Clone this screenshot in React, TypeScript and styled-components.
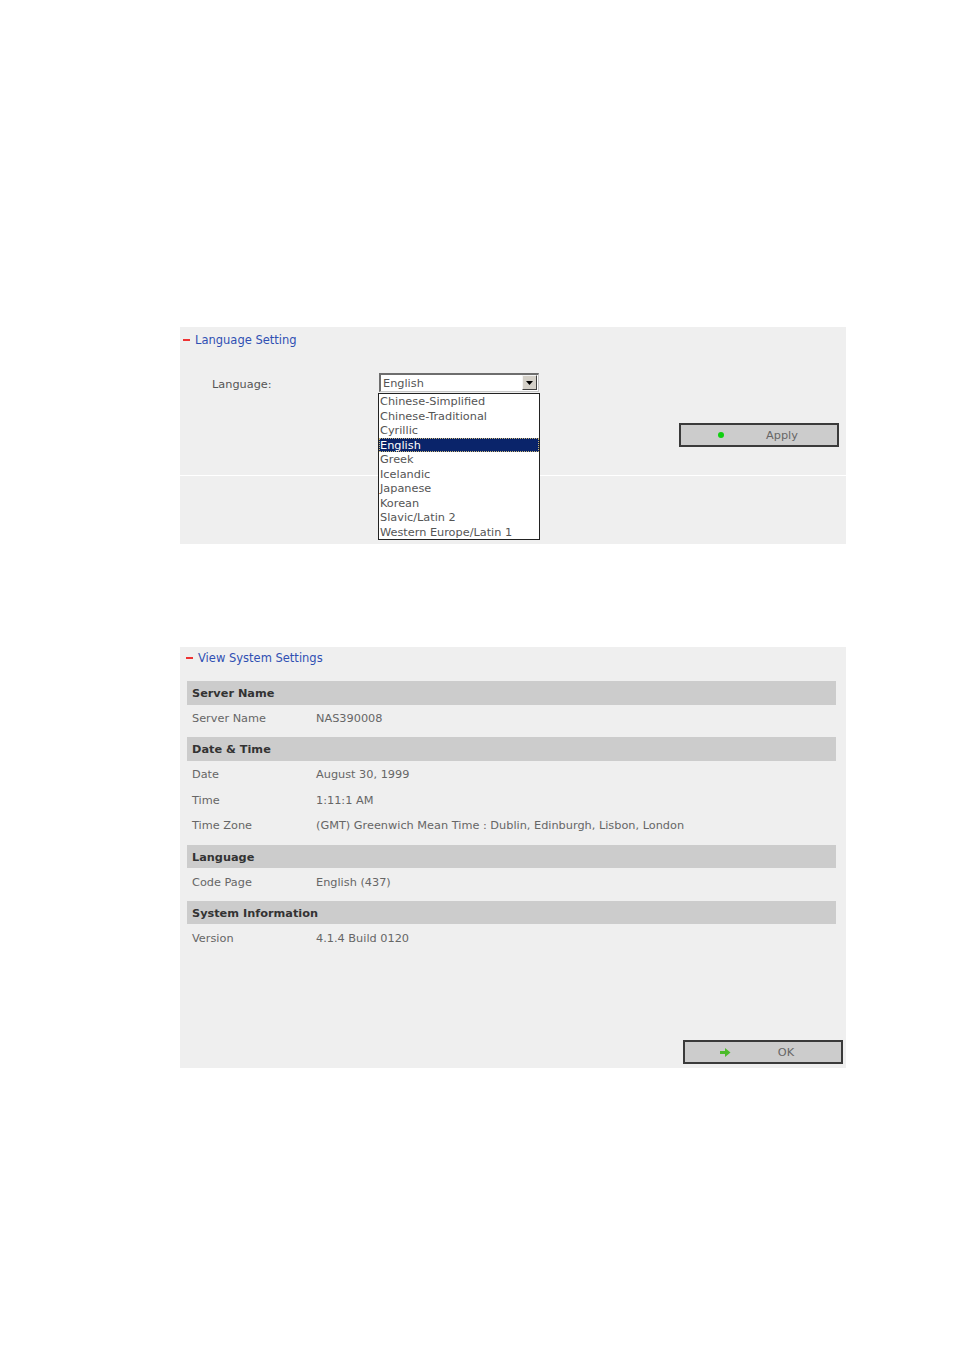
import React from "react";
import styled, { createGlobalStyle } from "styled-components";

const GlobalStyle = createGlobalStyle`
  html, body {
    margin: 0;
    padding: 0;
    background: #ffffff;
  }
  body {
    font-family: "DejaVu Sans", Verdana, sans-serif;
    font-size: 11.3px;
    color: #555555;
  }
`;

const Page = styled.div`
  display: flex;
  flex-direction: column;
  gap: 103px;
  padding: 327px 0 0 180px;
  min-height: 1350px;
  box-sizing: border-box;
`;

const Panel = styled.section<{ $height: number }>`
  position: relative;
  width: 666px;
  height: ${(p) => p.$height}px;
  background: #efefef;
  display: flex;
  flex-direction: column;
  box-sizing: border-box;
`;

const Title = styled.div<{ $indent: number; $top: number }>`
  display: flex;
  align-items: center;
  gap: 5px;
  height: 14px;
  margin-top: ${(p) => p.$top}px;
  padding-left: ${(p) => p.$indent}px;
  color: #2f4fb3;
  font-size: 11.5px;
`;

const Dash = styled.span`
  display: inline-block;
  width: 7px;
  height: 1.5px;
  background: #ee3333;
`;

const Upper = styled.div`
  height: 149px;
  border-bottom: 1px solid #ffffff;
  display: flex;
  flex-direction: column;
  padding-top: 6px;
  box-sizing: border-box;
`;

const Lower = styled.div`
  flex: 1;
`;

const FormRow = styled.div`
  display: flex;
  align-items: center;
  height: 19px;
  margin-top: 26px;
  padding-left: 32px;
`;

const FieldLabel = styled.span`
  width: 167px;
  padding-top: 3px;
  color: #555555;
`;

const SelectBox = styled.div`
  position: relative;
  width: 160px;
  height: 19px;
  box-sizing: border-box;
  background: #ffffff;
  border-top: 2px solid #6e6e6e;
  border-left: 2px solid #6e6e6e;
  border-right: 1px solid #c8c8c8;
  border-bottom: 1px solid #c8c8c8;
  display: flex;
  align-items: center;
  padding-left: 2px;
  color: #555555;
`;

const SelectArrow = styled.span`
  position: absolute;
  right: 1px;
  top: 0px;
  width: 15px;
  height: 15px;
  box-sizing: border-box;
  background: #d4d0c8;
  border-top: 1px solid #f4f4f4;
  border-left: 1px solid #f4f4f4;
  border-right: 1px solid #404040;
  border-bottom: 1px solid #404040;
  display: flex;
  align-items: center;
  justify-content: center;
`;

const DropList = styled.ul`
  position: absolute;
  top: 18px;
  left: -3px;
  width: 162px;
  margin: 0;
  padding: 0;
  list-style: none;
  background: #ffffff;
  border: 1px solid #222222;
  box-sizing: border-box;
  z-index: 2;
`;

const DropItem = styled.li<{ $active?: boolean }>`
  height: 14.5px;
  line-height: 15.5px;
  padding-left: 1px;
  white-space: nowrap;
  overflow: hidden;
  color: ${(p) => (p.$active ? "#ffffff" : "#555555")};
  background: ${(p) => (p.$active ? "#0a246a" : "transparent")};
  outline: ${(p) => (p.$active ? "1px dotted #c9b77a" : "none")};
  outline-offset: -1px;
`;

const ButtonRow = styled.div<{ $top?: number; $right: number; $bottom?: number }>`
  display: flex;
  justify-content: flex-end;
  margin-top: ${(p) => (p.$top != null ? `${p.$top}px` : "auto")};
  padding-right: ${(p) => p.$right}px;
  padding-bottom: ${(p) => p.$bottom ?? 0}px;
`;

const Button = styled.button`
  width: 160px;
  height: 24px;
  box-sizing: border-box;
  background: #cccccc;
  border: 2px solid #3a3a3a;
  display: flex;
  align-items: center;
  padding: 0 0 0 34px;
  font: inherit;
  color: #666666;
  cursor: pointer;
`;

const ButtonIcon = styled.span`
  width: 12px;
  display: flex;
  align-items: center;
  justify-content: center;
`;

const ButtonText = styled.span`
  flex: 1;
  text-align: center;
`;

const Dot = styled.span`
  width: 6px;
  height: 6px;
  border-radius: 50%;
  background: #10d010;
`;

const Groups = styled.div`
  margin-top: 16px;
  padding: 0 10px 0 7px;
  display: flex;
  flex-direction: column;
  gap: 7px;
`;

const GroupHeader = styled.div`
  height: 23.5px;
  background: #cccccc;
  display: flex;
  align-items: center;
  padding: 1px 0 0 5px;
  box-sizing: border-box;
  font-weight: bold;
  color: #333333;
`;

const InfoRow = styled.div`
  height: 25.7px;
  display: grid;
  grid-template-columns: 124px 1fr;
  align-items: center;
  padding: 2px 0 0 5px;
  box-sizing: border-box;
  color: #666666;
`;

const languages = [
  "Chinese-Simplified",
  "Chinese-Traditional",
  "Cyrillic",
  "English",
  "Greek",
  "Icelandic",
  "Japanese",
  "Korean",
  "Slavic/Latin 2",
  "Western Europe/Latin 1",
];

const settings = [
  { title: "Server Name", rows: [["Server Name", "NAS390008"]] },
  {
    title: "Date & Time",
    rows: [
      ["Date", "August 30, 1999"],
      ["Time", "1:11:1 AM"],
      ["Time Zone", "(GMT) Greenwich Mean Time : Dublin, Edinburgh, Lisbon, London"],
    ],
  },
  { title: "Language", rows: [["Code Page", "English (437)"]] },
  { title: "System Information", rows: [["Version", "4.1.4 Build 0120"]] },
];

const GreenArrow = () => (
  <svg width="11" height="9" viewBox="0 0 11 9">
    <path d="M0 3 H5 V0 L10.5 4.5 L5 9 V6 H0 Z" fill="#4cbb2a" />
  </svg>
);

const DownTriangle = () => (
  <svg width="7" height="4" viewBox="0 0 7 4">
    <path d="M0 0 H7 L3.5 4 Z" fill="#000000" />
  </svg>
);

export default function App() {
  return (
    <>
      <GlobalStyle />
      <Page>
        <Panel $height={217}>
          <Upper>
            <Title $indent={3} $top={0}>
              <Dash />
              Language Setting
            </Title>
            <FormRow>
              <FieldLabel>Language:</FieldLabel>
              <SelectBox>
                English
                <SelectArrow>
                  <DownTriangle />
                </SelectArrow>
                <DropList>
                  {languages.map((l) => (
                    <DropItem key={l} $active={l === "English"}>
                      {l}
                    </DropItem>
                  ))}
                </DropList>
              </SelectBox>
            </FormRow>
            <ButtonRow $top={31} $right={7}>
              <Button>
                <ButtonIcon>
                  <Dot />
                </ButtonIcon>
                <ButtonText>Apply</ButtonText>
              </Button>
            </ButtonRow>
          </Upper>
          <Lower />
        </Panel>

        <Panel $height={421}>
          <Title $indent={6} $top={4}>
            <Dash />
            View System Settings
          </Title>
          <Groups>
            {settings.map((g) => (
              <div key={g.title}>
                <GroupHeader>{g.title}</GroupHeader>
                {g.rows.map(([k, v]) => (
                  <InfoRow key={k}>
                    <span>{k}</span>
                    <span>{v}</span>
                  </InfoRow>
                ))}
              </div>
            ))}
          </Groups>
          <ButtonRow $right={3} $bottom={4}>
            <Button>
              <ButtonIcon>
                <GreenArrow />
              </ButtonIcon>
              <ButtonText>OK</ButtonText>
            </Button>
          </ButtonRow>
        </Panel>
      </Page>
    </>
  );
}
